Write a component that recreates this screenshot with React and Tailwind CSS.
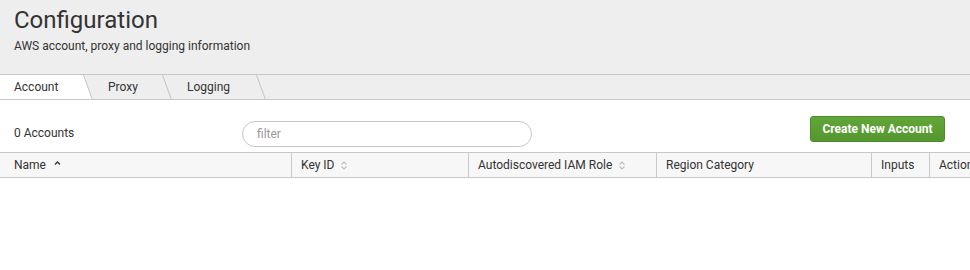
import React from 'react';

function SortIcon() {
  return (
    <svg width="8" height="11" viewBox="0 0 8 11" className="ml-[6px] inline-block">
      <path d="M1.5 4.5 L4 2 L6.5 4.5" fill="none" stroke="#bdbdbd" strokeWidth="1.1" />
      <path d="M1.5 6.5 L4 9 L6.5 6.5" fill="none" stroke="#bdbdbd" strokeWidth="1.1" />
    </svg>
  );
}

function SortUp() {
  return (
    <svg width="7" height="10" viewBox="0 0 7 10" className="ml-[8px] inline-block">
      <path d="M1 4.5 L3.5 2 L6 4.5" fill="none" stroke="#333" strokeWidth="1.3" />
    </svg>
  );
}

function Tab({ label, active, className }) {
  return (
    <div className={`relative h-full flex items-center text-[12px] text-[#333] ${className}`}>
      <span
        className={`absolute top-0 -bottom-px -left-6 right-0 origin-top skew-x-[20deg] border-r border-[#c3c3c3] ${
          active ? 'bg-white' : ''
        }`}
      />
      <span className="relative">{label}</span>
    </div>
  );
}

export default function App() {
  const columns = [
    { label: 'Name', w: 'w-[291px]', icon: <SortUp /> },
    { label: 'Key ID', w: 'w-[177px]', icon: <SortIcon /> },
    { label: 'Autodiscovered IAM Role', w: 'w-[188px]', icon: <SortIcon /> },
    { label: 'Region Category', w: 'w-[215px]' },
    { label: 'Inputs', w: 'w-[58px]' },
    { label: 'Actions', w: 'w-[60px]' },
  ];

  return (
    <div className="w-[970px] h-[270px] overflow-hidden bg-white font-['Roboto',sans-serif] text-[#333]">
      {/* page header */}
      <div className="bg-[#eee] h-[75px] border-b border-[#c8c8c8] px-[14px] pt-[4px]">
        <h1 className="text-[24px] leading-[32px] text-[#333]">Configuration</h1>
        <p className="text-[12px] leading-[16px] mt-[2px]">AWS account, proxy and logging information</p>
      </div>

      {/* tabs */}
      <div className="flex h-[25px] bg-[#eee] border-b border-[#c8c8c8] overflow-hidden">
        <Tab label="Account" active className="w-[84px] pl-[14px] z-10" />
        <Tab label="Proxy" className="w-[79px] pl-[24px]" />
        <Tab label="Logging" className="w-[94px] pl-[24px]" />
      </div>

      {/* toolbar */}
      <div className="flex h-[52px]">
        <div className="w-[242px] pl-[14px] pt-[25px] text-[12px] leading-[16px]">0 Accounts</div>
        <div className="pt-[21px]">
          <input
            placeholder="filter"
            className="w-[290px] h-[26px] rounded-full border border-[#c8c8c8] px-[14px] text-[12px] placeholder:text-[#999] outline-none"
          />
        </div>
        <div className="flex-1" />
        <div className="pt-[16px] pr-[25px]">
          <button className="h-[26px] w-[135px] rounded-[3px] border border-[#4e8a2c] bg-linear-to-b from-[#62a539] to-[#53972f] text-white text-[12px] font-bold">
            Create New Account
          </button>
        </div>
      </div>

      {/* table header */}
      <div className="flex h-[26px] bg-[#f7f7f7] border-y border-[#c8c8c8] text-[12px]">
        {columns.map((c, i) => (
          <div
            key={c.label}
            className={`${c.w} shrink-0 flex items-center ${i === 0 ? 'pl-[14px]' : 'pl-[9px] border-l border-[#c8c8c8]'} whitespace-nowrap`}
          >
            {c.label}
            {c.icon}
          </div>
        ))}
      </div>
    </div>
  );
}
